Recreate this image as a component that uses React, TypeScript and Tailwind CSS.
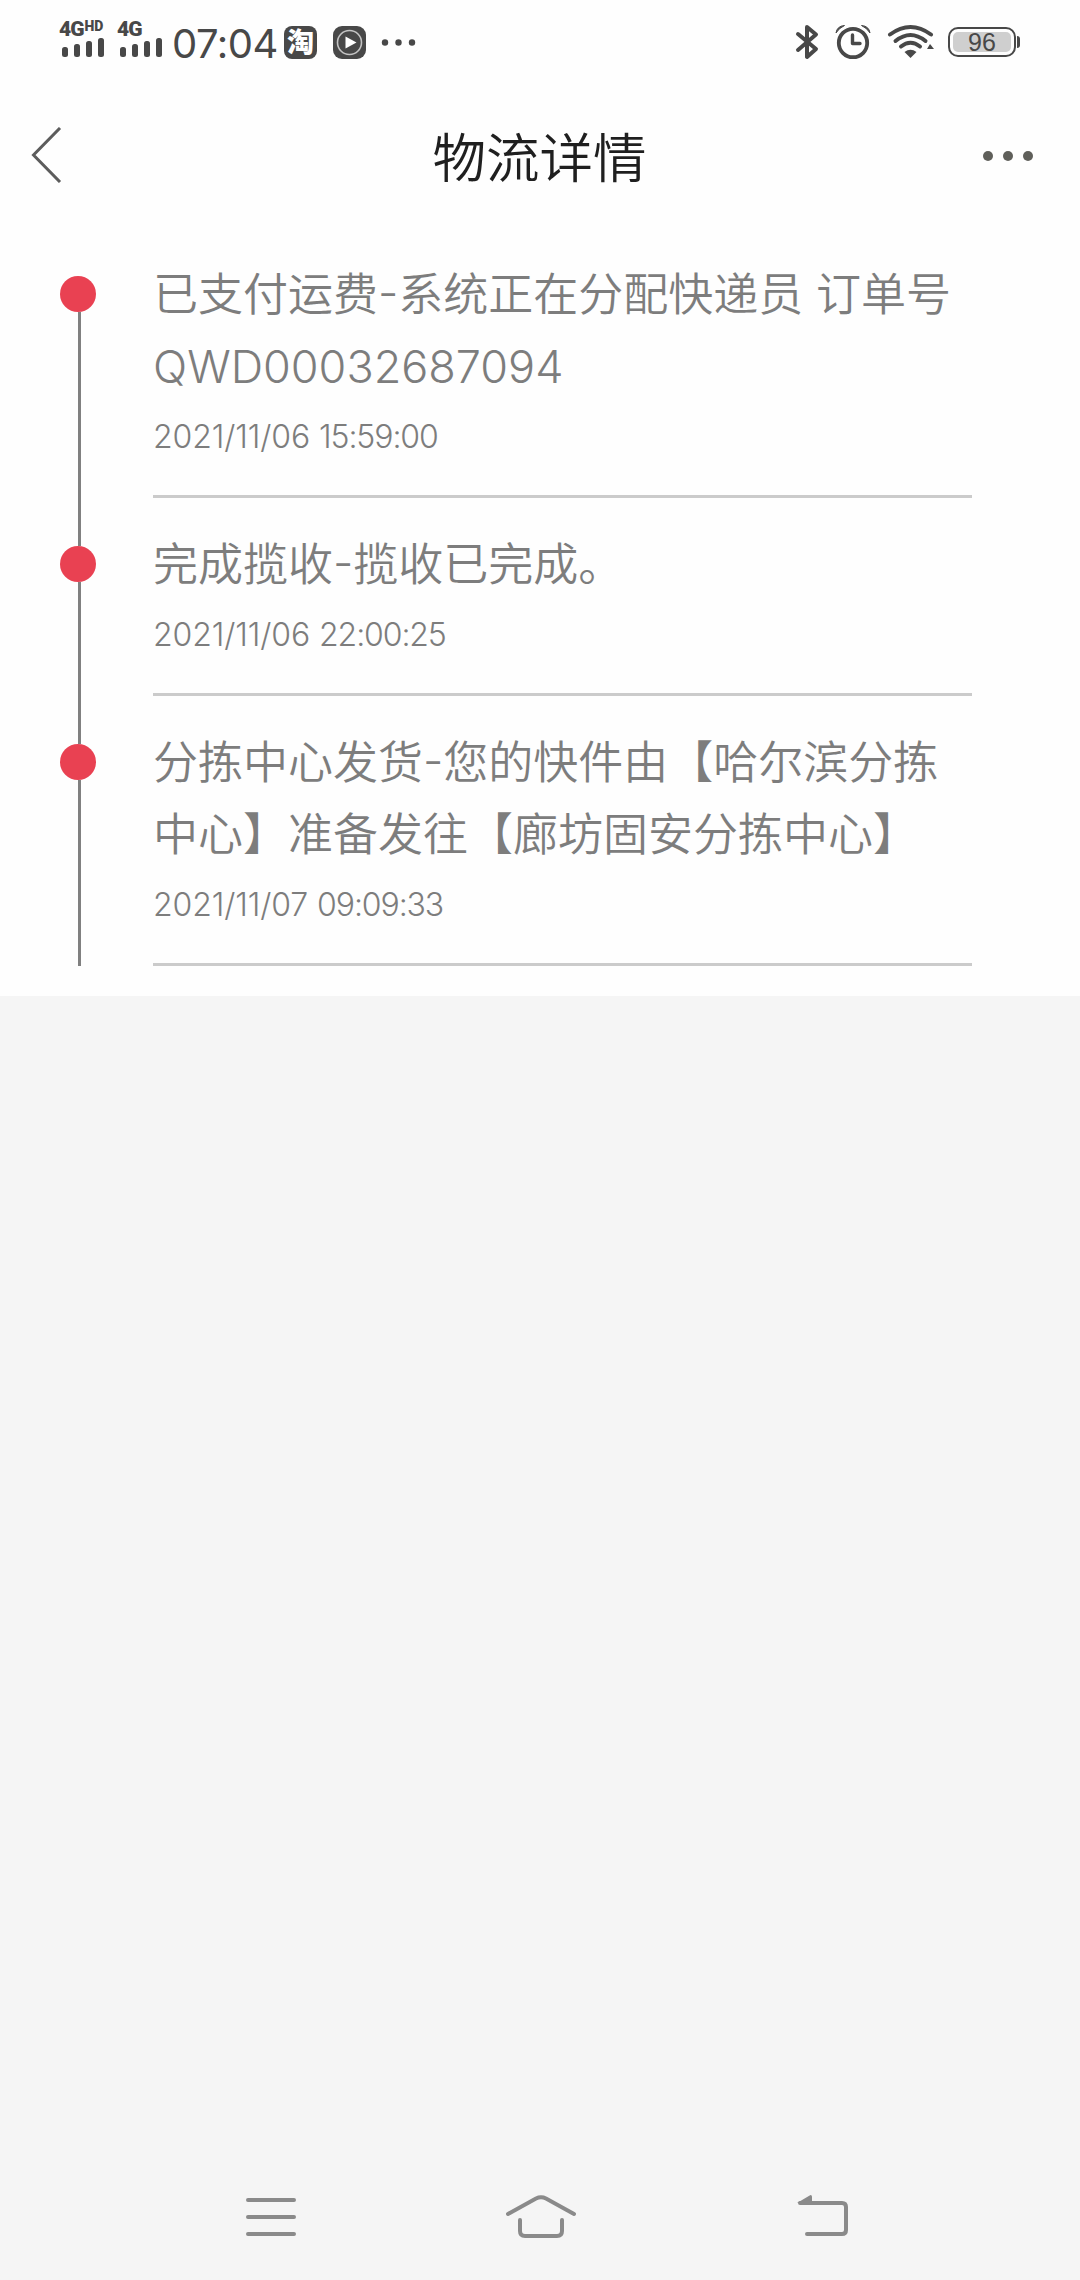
type TrackEvent = { text: string; date: string; time: string };

const EVENTS: TrackEvent[] = [
  { text: "已支付运费-系统正在分配快递员 订单号QWD00032687094", date: "2021/11/06", time: "15:59:00" },
  { text: "完成揽收-揽收已完成。", date: "2021/11/06", time: "22:00:25" },
  {
    text: "分拣中心发货-您的快件由【哈尔滨分拣中心】准备发往【廊坊固安分拣中心】",
    date: "2021/11/07",
    time: "09:09:33",
  },
];

function Signal({ hd = false }: { hd?: boolean }) {
  return (
    <div className="flex flex-col w-[50px] h-[38px]">
      <div className="flex items-start h-[16px] font-['Roboto',sans-serif] font-black leading-none">
        <span className="text-[21px] leading-[16px] tracking-[-1px]">4G</span>
        {hd && <span className="text-[14px] leading-[11px] ml-[1px]">HD</span>}
      </div>
      <svg className="ml-[3px]" width="44" height="21" viewBox="0 0 44 21" fill="currentColor">
        <rect x="0" y="10" width="6" height="10" rx="2.5" />
        <rect x="12" y="7" width="6" height="13" rx="2.5" />
        <rect x="24" y="4" width="6" height="16" rx="2.5" />
        <rect x="36" y="1" width="6" height="19" rx="2.5" />
      </svg>
    </div>
  );
}

function StatusBar() {
  return (
    <div className="flex items-center justify-between h-[82px] pl-[59px] pr-[60px] text-[#484848]">
      <div className="flex items-center h-[80px] self-start pt-[4px]">
        <div className="flex gap-[8px] pb-[4px]">
          <Signal hd />
          <Signal />
        </div>
        <span className="w-[113px] pt-[4px] pl-[5px] text-[40px] leading-[48px] tracking-[-0.5px] whitespace-nowrap">07:04</span>
        <div className="flex items-center justify-center ml-[4px] size-[33px] rounded-[8px] bg-[#484848] text-white text-[27px] leading-[33px] font-black overflow-hidden">
          淘
        </div>
        <svg className="ml-[16px]" width="33" height="33" viewBox="0 0 33 33">
          <rect width="33" height="33" rx="9" fill="#484848" />
          <circle cx="16.5" cy="16.5" r="12" fill="none" stroke="#c4c4c4" strokeWidth="1.6" />
          <path d="M12.5 10.5 L23.5 16.5 L12.5 22.5Z" fill="#fff" />
        </svg>
        <svg className="ml-[15px]" width="36" height="10" viewBox="0 0 36 10" fill="currentColor">
          <circle cx="4" cy="5.5" r="3.2" />
          <circle cx="17.5" cy="5.5" r="3.2" />
          <circle cx="31" cy="5.5" r="3.2" />
        </svg>
      </div>

      <div className="flex items-center h-[80px] self-start pt-[4px]">
        <svg width="24" height="36" viewBox="0 0 24 36" fill="none" stroke="currentColor" strokeWidth="4" strokeLinecap="round" strokeLinejoin="round">
          <path d="M3 10 L21 25 L12 33 V3 L21 10.5 L3 26" />
        </svg>
        <svg className="ml-[16px]" width="36" height="36" viewBox="0 0 36 36" fill="none" stroke="currentColor">
          <circle cx="18" cy="19" r="14.2" strokeWidth="3.8" />
          <path d="M17.5 11 V19.5 H25" strokeWidth="3.4" strokeLinecap="round" strokeLinejoin="round" />
          <path d="M1 9 Q2 2 9.500 1.500 Q4 4 1 9Z M35 9 Q34 2 26.500 1.500 Q32 4 35 9Z" fill="currentColor" strokeWidth="1" />
        </svg>
        <svg className="ml-[16px]" width="48" height="36" viewBox="0 0 48 36" fill="none" stroke="currentColor" strokeWidth="4" strokeLinecap="round">
          <path d="M3 10.500 Q23.500 -4.500 44 10.500" />
          <path d="M8.500 17 Q23.500 5 38.500 17" />
          <path d="M14 22.500 Q23.500 15 33 22.500" />
          <path d="M17.500 28 Q23.500 23.500 29.500 28 L23.500 34Z" fill="currentColor" stroke="none" />
          <path d="M43 20 L47 25 H40Z" fill="currentColor" stroke="none" />
        </svg>
        <div className="flex items-center ml-[13px]">
          <div className="flex w-[68px] h-[30px] p-[3px] border-[2.500px] border-[#484848] rounded-[10px]">
            <div className="flex flex-1 items-center justify-center bg-[#cfcfcf] rounded-[5px] text-[25px] leading-[20px] font-['Liberation_Sans',sans-serif]">
              96
            </div>
          </div>
          <div className="ml-[1px] w-[3px] h-[12px] rounded-r-[3px] bg-[#484848]" />
        </div>
      </div>
    </div>
  );
}

function Header() {
  return (
    <header className="flex items-center justify-between h-[146px] pl-[30px] pr-[46px]">
      <svg width="32" height="56" viewBox="0 0 32 56" fill="none" stroke="#5c5c5c" strokeWidth="3">
        <path d="M30 1 L3.500 28 L30 55" />
      </svg>
      <h1 className="ml-[35px] pt-[7px] text-[53.500px] leading-[60px] font-[350] text-[#1f1f1f]">物流详情</h1>
      <svg className="mt-[2px]" width="52" height="12" viewBox="0 0 52 12" fill="#5f5f5a">
        <circle cx="6" cy="6" r="5" />
        <circle cx="26" cy="6" r="5" />
        <circle cx="46" cy="6" r="5" />
      </svg>
    </header>
  );
}

function TimelineItem({ event, first }: { event: TrackEvent; first: boolean }) {
  return (
    <li className="flex">
      <div className="flex flex-col items-center ml-[60px] w-[39px]">
        <div className={first ? "w-[3px] h-[48px]" : "w-[3px] h-[48px] bg-[#808080]"} />
        <div className="size-[36px] mr-[3px] rounded-full bg-[#e94152]" />
        <div className="w-[3px] flex-1 bg-[#808080]" />
      </div>
      <div className="ml-[54px] w-[819px] pt-[31px] border-b-[3px] border-[#cbcbcb] text-[#7d7d7d]">
        <p className="text-[45px] leading-[72px] font-[350] break-words [font-feature-settings:'case']">{event.text}</p>
        <p className="mt-[10px] mb-[34px] text-[32px] leading-[48px] font-light tracking-[-0.1px]">
          {event.date} <span className="tracking-[-1.1px]">{event.time}</span>
        </p>
      </div>
    </li>
  );
}

function NavBar() {
  return (
    <nav className="flex items-center h-[126px] pl-[246px] text-[#8a8a8a]">
      <svg width="50" height="44" viewBox="0 0 50 44" fill="none" stroke="currentColor" strokeWidth="4" strokeLinecap="round">
        <path d="M2 5 H48 M2 22 H48 M2 39 H48" />
      </svg>
      <svg className="ml-[209px]" width="72" height="44" viewBox="0 0 72 44" fill="none" stroke="currentColor" strokeWidth="4" strokeLinecap="round">
        <path d="M3 19 L31 3.500 Q36 1 41 3.500 L69 19" />
        <path d="M15 25 V36 Q15 41 20 41 H52 Q57 41 57 36 V25" />
      </svg>
      <svg className="ml-[220px]" width="52" height="44" viewBox="0 0 52 44" fill="none" stroke="currentColor" strokeWidth="4" strokeLinecap="round">
        <path d="M3 8 H45 Q49 8 49 12 V35 Q49 39 45 39 H10" />
        <path d="M0 8 L13.500 0 Q15 0 15 1.500 V8Z" fill="currentColor" stroke="none" />
      </svg>
    </nav>
  );
}

export default function App() {
  return (
    <div className="flex flex-col w-[1080px] h-[2280px] overflow-hidden bg-[#f5f5f5] font-['Inter','Noto_Sans_CJK_SC',sans-serif]">
      <div className="h-[996px] bg-[#fefefe]">
        <StatusBar />
        <Header />
        <ul>
          {EVENTS.map((event, i) => (
            <TimelineItem key={`${event.date} ${event.time}`} event={event} first={i === 0} />
          ))}
        </ul>
      </div>
      <div className="flex-1" />
      <NavBar />
    </div>
  );
}
